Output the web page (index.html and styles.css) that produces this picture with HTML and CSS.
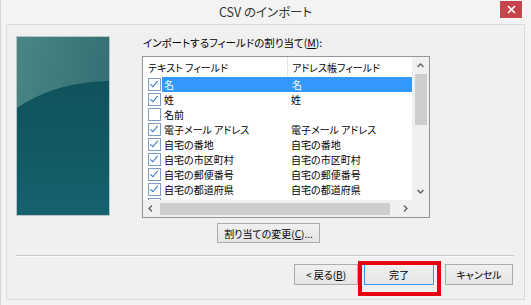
FILE: index.html
```html
<!DOCTYPE html>
<html lang="ja">
<head>
<meta charset="utf-8">
<title>CSV のインポート</title>
<link rel="stylesheet" href="styles.css">
</head>
<body>
<div class="window">
    <div class="titlebar">
        <span></span>
        <span class="title">CSV のインポート</span>
        <span class="close">
            <svg width="9" height="9" viewBox="0 0 9 9"><path d="M1 1L8 8M8 1L1 8" stroke="#fff" stroke-width="1.6"/></svg>
        </span>
    </div>
    <div class="panel">
        <div class="top">
            <div class="banner"></div>
            <div class="main">
                <div class="caption">インポートするフィールドの割り当て(<u>M</u>):</div>
                <div class="listbox">
                    <div class="listview">
                        <div class="list-area">
                            <div class="head">
                                <span class="col1">テキスト フィールド</span>
                                <span class="col2">アドレス帳フィールド</span>
                            </div>
                            <div class="row selected">
                                <span class="col1"><i class="check on"></i><span class="label">名</span></span>
                                <span class="col2">名</span>
                            </div>
                            <div class="row">
                                <span class="col1"><i class="check on"></i><span class="label">姓</span></span>
                                <span class="col2">姓</span>
                            </div>
                            <div class="row">
                                <span class="col1"><i class="check"></i><span class="label">名前</span></span>
                                <span class="col2"></span>
                            </div>
                            <div class="row">
                                <span class="col1"><i class="check on"></i><span class="label">電子メール アドレス</span></span>
                                <span class="col2">電子メール アドレス</span>
                            </div>
                            <div class="row">
                                <span class="col1"><i class="check on"></i><span class="label">自宅の番地</span></span>
                                <span class="col2">自宅の番地</span>
                            </div>
                            <div class="row">
                                <span class="col1"><i class="check on"></i><span class="label">自宅の市区町村</span></span>
                                <span class="col2">自宅の市区町村</span>
                            </div>
                            <div class="row">
                                <span class="col1"><i class="check on"></i><span class="label">自宅の郵便番号</span></span>
                                <span class="col2">自宅の郵便番号</span>
                            </div>
                            <div class="row">
                                <span class="col1"><i class="check on"></i><span class="label">自宅の都道府県</span></span>
                                <span class="col2">自宅の都道府県</span>
                            </div>
                            <div class="row">
                                <span class="col1"><i class="check on"></i><span class="label">自宅の国/地域</span></span>
                                <span class="col2">自宅の国/地域</span>
                            </div>
                        </div>
                        <div class="vscroll">
                            <svg class="arrow" width="7" height="5" viewBox="0 0 7 5"><path d="M0.5 4L3.5 1L6.5 4" fill="none" stroke="#606060" stroke-width="1.3"/></svg>
                            <div class="vthumb"></div>
                            <div class="vtrack"></div>
                            <svg class="arrow" width="7" height="5" viewBox="0 0 7 5"><path d="M0.5 1L3.5 4L6.5 1" fill="none" stroke="#606060" stroke-width="1.3"/></svg>
                        </div>
                    </div>
                    <div class="hbar">
                        <div class="hscroll">
                            <svg class="arrow" width="5" height="7" viewBox="0 0 5 7"><path d="M4 0.5L1 3.5L4 6.5" fill="none" stroke="#606060" stroke-width="1.3"/></svg>
                            <div class="hthumb"></div>
                            <svg class="arrow" width="5" height="7" viewBox="0 0 5 7"><path d="M1 0.5L4 3.5L1 6.5" fill="none" stroke="#606060" stroke-width="1.3"/></svg>
                        </div>
                        <div class="corner"></div>
                    </div>
                </div>
                <div class="change-row">
                    <button type="button" class="btn change">割り当ての変更(<u>C</u>)...</button>
                </div>
            </div>
        </div>
        <div class="sep"></div>
        <div class="buttons">
            <button type="button" class="btn back">&lt; 戻る(<u>B</u>)</button>
            <span class="marked">
                <button type="button" class="btn finish">完了</button>
            </span>
            <button type="button" class="btn cancel">キャンセル</button>
        </div>
    </div>
</div>
</body>
</html>
```

FILE: styles.css
```css
body {
    margin: 0;
    font-family: "Noto Sans CJK JP", "Liberation Sans", sans-serif;
    font-feature-settings: "palt";
    color: #000;
}
.window {
    width: 531px;
    height: 305px;
    box-sizing: border-box;
    background: #f3f3f3;
    border-left: 1px solid #d4d4d4;
    display: flex;
    flex-direction: column;
}
.titlebar {
    height: 24px;
    display: grid;
    grid-template-columns: 1fr auto 1fr;
    align-items: center;
}
.title {
    font-size: 12.5px;
    color: #333;
    margin-top: -2px;
    margin-left: -1px;
}
.close {
    justify-self: end;
    width: 22px;
    height: 17px;
    margin: -6px 9px 0 0;
    background: #c7444a;
    display: flex;
    align-items: center;
    justify-content: center;
}
.panel {
    margin: 0 6px 5px 5px;
    flex: 1;
    background: #f0f0f0;
    border: 1px solid #dadada;
    padding: 11px 10px 0 9px;
}
.top {
    display: flex;
    align-items: flex-start;
    gap: 32px;
}
.banner {
    width: 92px;
    height: 178px;
    border: 1px solid #b9c5c5;
    position: relative;
    overflow: hidden;
    background: linear-gradient(100deg, #4a8685 0%, #3b7679 55%, #2e6a70 100%);
}
.banner::after {
    content: "";
    position: absolute;
    left: -36px;
    top: 44px;
    width: 260px;
    height: 174px;
    border-radius: 50%;
    background: linear-gradient(180deg, #0f525c 0%, #115a64 40%, #1a6677 100%);
}
.main {
    width: 288px;
    font-size: 10px;
}
.caption {
    height: 14px;
    line-height: 14px;
    margin-bottom: 6px;
    padding-left: 1px;
    font-size: 10.5px;
}
.listbox {
    height: 160px;
    border: 1px solid #8f969e;
    background: #fff;
    display: flex;
    flex-direction: column;
}
.listview {
    display: flex;
    height: 143px;
}
.list-area {
    flex: 1;
    overflow: hidden;
}
.head {
    height: 20px;
    display: flex;
    align-items: center;
}
.head .col1 {
    border-right: 1px solid #e5e5e5;
    height: 20px;
    line-height: 19px;
}
.col1 {
    width: 139px;
    padding-left: 5px;
    display: flex;
    align-items: center;
}
.col2 {
    flex: 1;
    padding-left: 4px;
}
.row {
    height: 15px;
    line-height: 15px;
    display: flex;
    white-space: nowrap;
}
.row .col1 {
    padding-right: 0;
}
.label {
    flex: 1;
    padding-left: 2px;
    margin-left: 1px;
}
.row.selected .label,
.row.selected .col2 {
    background: #3399ff;
    color: #fff;
}
.row.selected .col2 {
    padding-left: 5px;
}
.check {
    width: 11px;
    height: 11px;
    border: 1px solid #7f9cc2;
    background: #fff;
    position: relative;
}
.check.on::after {
    content: "";
    position: absolute;
    left: 3px;
    top: 0;
    width: 3px;
    height: 7px;
    border: solid #2f74c8;
    border-width: 0 1.5px 1.5px 0;
    transform: rotate(40deg);
}
.vscroll {
    width: 17px;
    background: #f0f0f0;
    display: flex;
    flex-direction: column;
    align-items: center;
}
.vscroll .arrow {
    margin: 6px 0;
}
.vthumb {
    width: 12px;
    height: 51px;
    margin-top: 0;
    background: #cdcdcd;
}
.vtrack {
    flex: 1;
}
.hbar {
    display: flex;
    height: 17px;
}
.hscroll {
    flex: 1;
    background: #f0f0f0;
    display: flex;
    align-items: center;
    padding: 0 4px 0 5px;
    gap: 7px;
}
.hthumb {
    flex: 1;
    height: 12px;
    background: #cdcdcd;
    margin-right: 6px;
}
.corner {
    width: 17px;
    background: #f0f0f0;
}
.change-row {
    margin-top: 5px;
    padding-left: 75px;
}
.btn {
    font-family: inherit;
    font-feature-settings: "palt";
    font-size: 10px;
    color: #000;
    border: 1px solid #acacac;
    background: linear-gradient(#f0f0f0, #e5e5e5);
    padding: 0;
    height: 21px;
}
.change {
    width: 103px;
    height: 20px;
}
.sep {
    margin-top: 12px;
    height: 1px;
    background: #c9c9c9;
    border-bottom: 1px solid #fafafa;
}
.buttons {
    margin-top: 7px;
    display: flex;
    justify-content: flex-end;
    align-items: flex-start;
    padding-right: 1px;
}
.back {
    width: 64px;
}
.marked {
    position: relative;
    margin-left: 6px;
    display: flex;
}
.marked::after {
    content: "";
    position: absolute;
    left: -6px;
    right: -7px;
    top: -3px;
    bottom: -11px;
    border: 4px solid #e60012;
}
.finish {
    width: 70px;
    border-color: #3399ff;
}
.cancel {
    width: 68px;
    margin-left: 11px;
}
```
